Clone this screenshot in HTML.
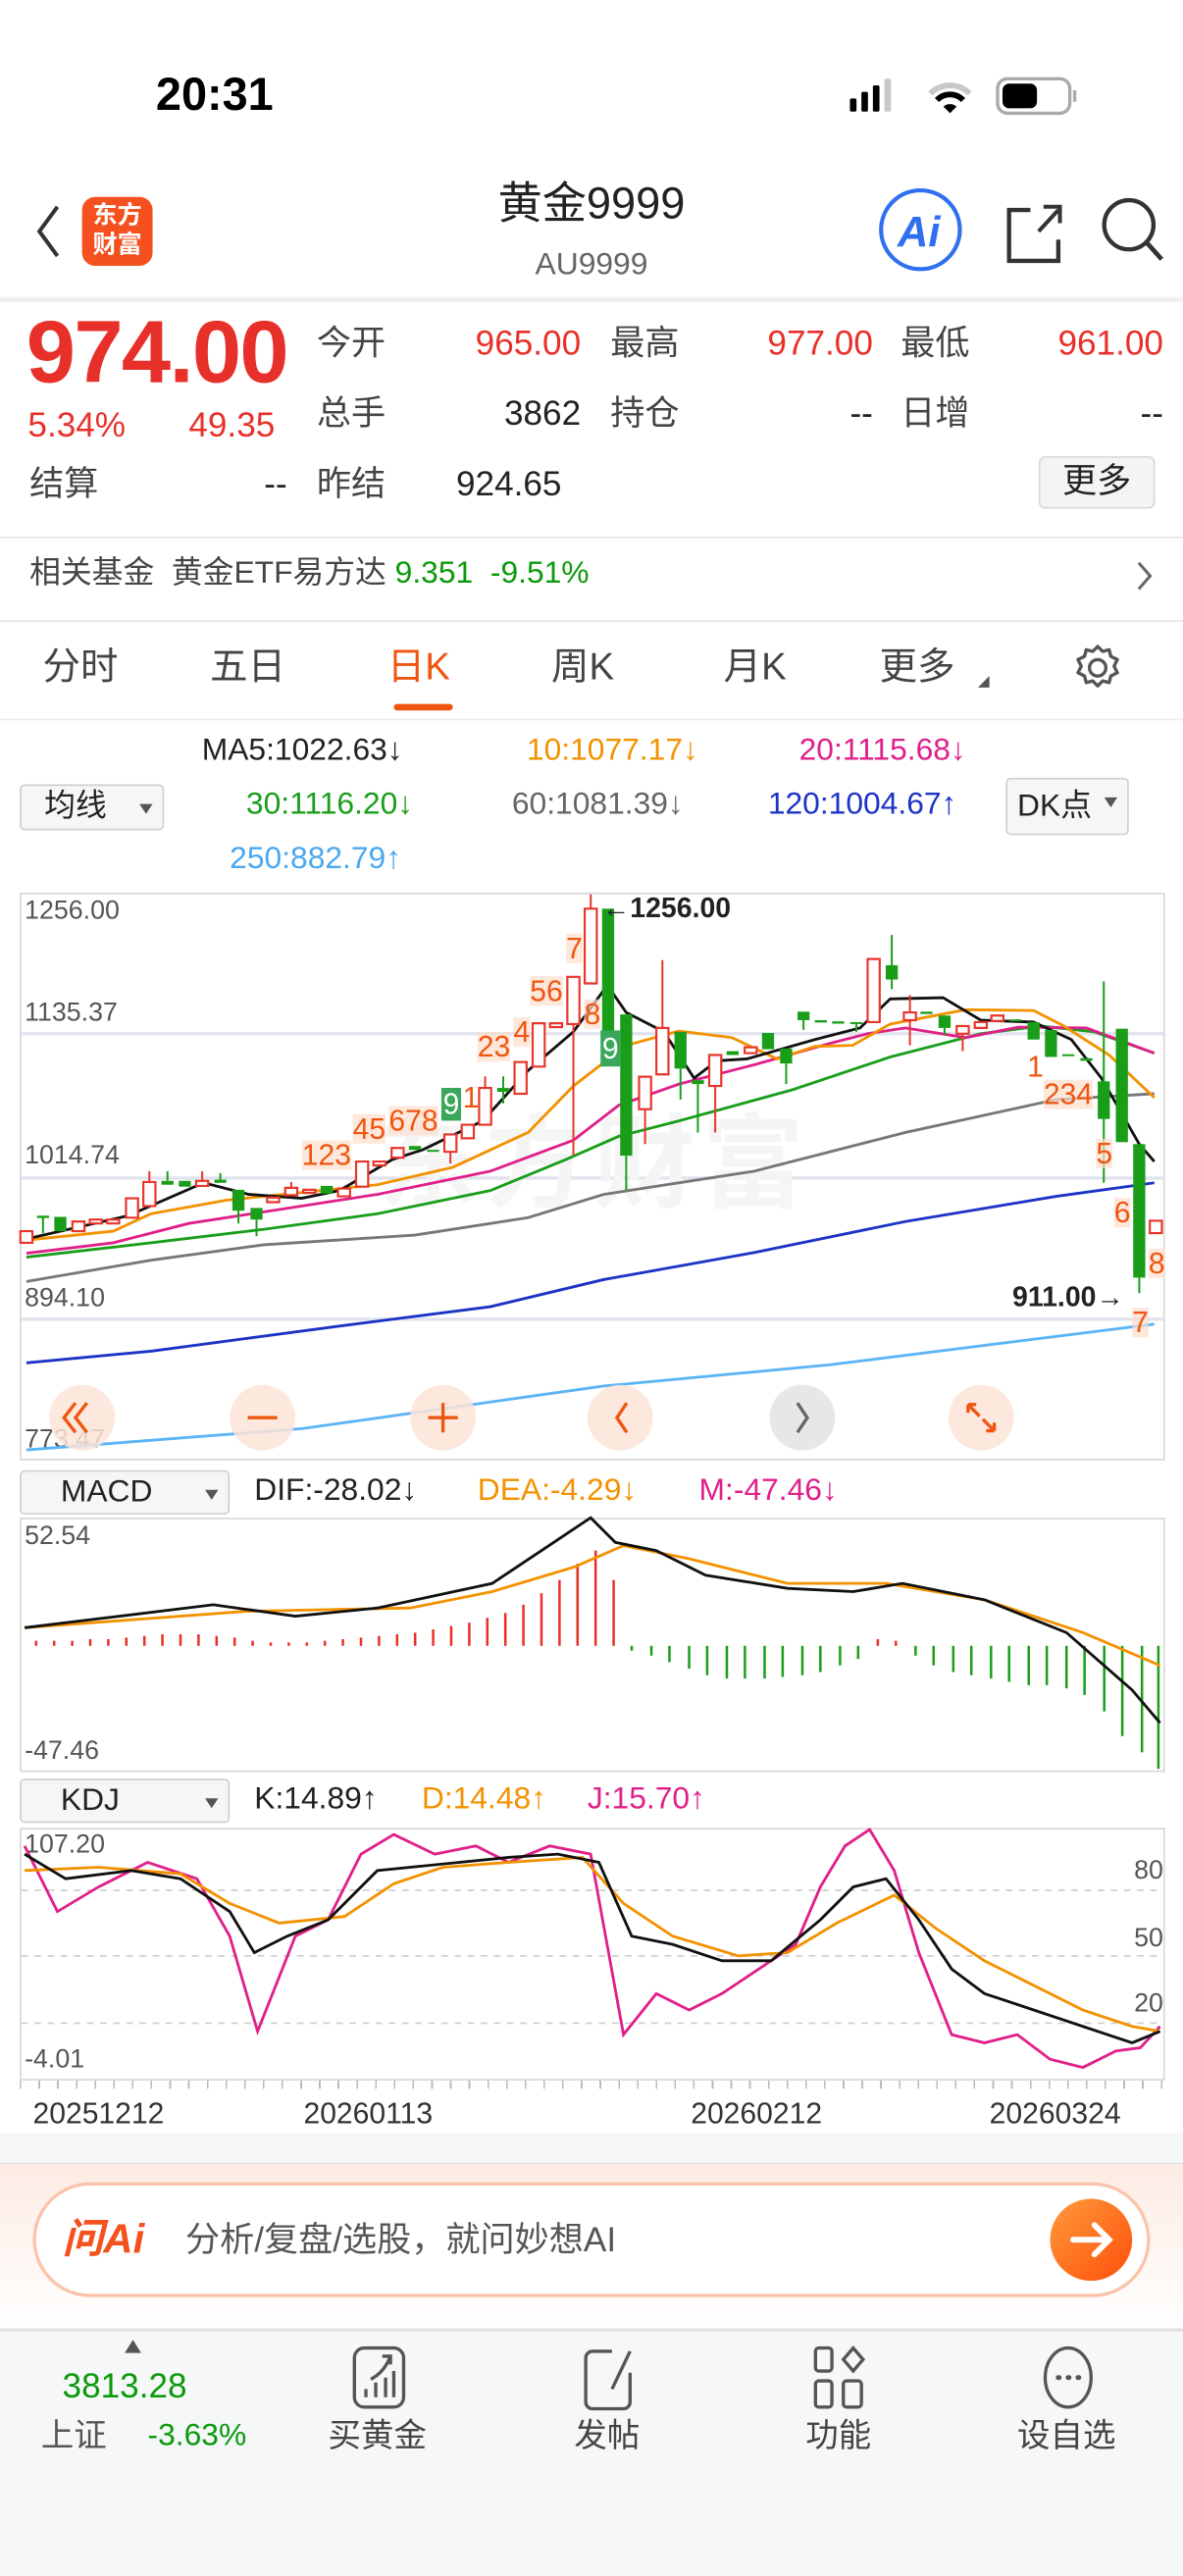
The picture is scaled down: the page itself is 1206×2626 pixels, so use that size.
<!DOCTYPE html>
<html><head><meta charset="utf-8">
<style>
html,body{margin:0;padding:0;background:#fff;}
body{width:1206px;height:2622px;overflow:hidden;position:relative;}
#w{position:absolute;left:0;top:0;width:721px;height:1568px;transform:scale(1.672677);transform-origin:0 0;font-family:"Liberation Sans","Noto Sans CJK SC",sans-serif;color:#222;}
.t{position:absolute;white-space:nowrap;line-height:1;}
.r{color:#e8302a}.g{color:#0b9a0b}
.box{position:absolute;border:1px solid #d8d8d8;box-sizing:border-box;}
.dd{position:absolute;background:#f6f6f6;border:1px solid #cfcfcf;border-radius:3px;box-sizing:border-box;font-size:19px;line-height:26px;padding-left:14px;}
.dd:after{content:"";position:absolute;right:6px;top:11px;border-left:4px solid transparent;border-right:4px solid transparent;border-top:6px solid #555;}
.nb{position:absolute;width:40px;height:40px;border-radius:50%;background:#fde4d8;opacity:.85;}
</style></head><body><div id="w">

<div class="t" style="left:95px;top:44px;font-size:28px;font-weight:bold;color:#000">20:31</div>
<svg style="position:absolute;left:515px;top:45px" width="145" height="28">
<rect x="3" y="15" width="4" height="8" rx="1" fill="#000"/><rect x="10" y="11" width="4" height="12" rx="1" fill="#000"/><rect x="17" y="7" width="4" height="16" rx="1" fill="#000"/><rect x="24" y="3" width="4" height="20" rx="1" fill="#c8c8c8"/>
<path d="M52 12a17 17 0 0 1 24 0" stroke="#c8c8c8" stroke-width="3.5" fill="none"/><path d="M56 16a11 11 0 0 1 16 0" stroke="#000" stroke-width="3.5" fill="none"/><path d="M60 20l4 4 4-4a6 6 0 0 0-8 0z" fill="#000"/>
<rect x="93" y="3" width="44" height="21" rx="6" fill="none" stroke="#aaa" stroke-width="2"/><rect x="96" y="6" width="21" height="15" rx="4" fill="#000"/><rect x="139" y="10" width="2" height="7" fill="#aaa"/>
</svg>

<svg style="position:absolute;left:15px;top:120px" width="30" height="42"><path d="M20 6L9 21l11 15" stroke="#333" stroke-width="2.4" fill="none"/></svg>
<div style="position:absolute;left:50px;top:120px;width:43px;height:42px;border-radius:8px;background:#f4511e;color:#fff;font-weight:bold;font-size:15px;line-height:18px;text-align:center;padding-top:3px;box-sizing:border-box">东方<br>财富</div>
<div class="t" style="left:0;width:721px;text-align:center;top:111px;font-size:27px;color:#222">黄金9999</div>
<div class="t" style="left:0;width:721px;text-align:center;top:152px;font-size:19px;color:#666">AU9999</div>
<svg style="position:absolute;left:530px;top:112px" width="190" height="56">
<circle cx="31" cy="28" r="24" fill="none" stroke="#2f6ff0" stroke-width="2.5"/>
<text x="17" y="38" font-family="Liberation Sans" font-weight="bold" font-style="italic" font-size="26" fill="#2f6ff0">Ai</text>
<path d="M98 16h-13v31h30v-13" stroke="#333" stroke-width="2.6" fill="none"/><path d="M103 29l12-13M106 14h10v10" stroke="#333" stroke-width="2.4" fill="none"/>
<circle cx="158" cy="25" r="15" fill="none" stroke="#333" stroke-width="2.6"/><path d="M169 36l9 10" stroke="#333" stroke-width="2.8"/>
</svg>
<div style="position:absolute;left:0;top:181px;width:721px;height:3px;background:#efefef"></div>

<div class="t r" style="left:16px;top:188px;font-size:54px;font-weight:bold;letter-spacing:-1px">974.00</div>
<div class="t r" style="left:17px;top:249px;font-size:21px">5.34%</div>
<div class="t r" style="left:115px;top:249px;font-size:21px">49.35</div>
<div class="t" style="left:193px;top:199px;font-size:21px;color:#444">今开</div>
<div class="t r" style="right:367px;top:199px;font-size:21px">965.00</div>
<div class="t" style="left:372px;top:199px;font-size:21px;color:#444">最高</div>
<div class="t r" style="right:189px;top:199px;font-size:21px">977.00</div>
<div class="t" style="left:549px;top:199px;font-size:21px;color:#444">最低</div>
<div class="t r" style="right:12px;top:199px;font-size:21px">961.00</div>
<div class="t" style="left:193px;top:242px;font-size:21px;color:#444">总手</div>
<div class="t" style="right:367px;top:242px;font-size:21px;color:#222">3862</div>
<div class="t" style="left:372px;top:242px;font-size:21px;color:#444">持仓</div>
<div class="t" style="right:189px;top:242px;font-size:21px">--</div>
<div class="t" style="left:549px;top:242px;font-size:21px;color:#444">日增</div>
<div class="t" style="right:12px;top:242px;font-size:21px">--</div>
<div class="t" style="left:18px;top:285px;font-size:21px;color:#444">结算</div>
<div class="t" style="right:546px;top:285px;font-size:21px">--</div>
<div class="t" style="left:193px;top:285px;font-size:21px;color:#444">昨结</div>
<div class="t" style="left:278px;top:285px;font-size:21px">924.65</div>
<div style="position:absolute;left:633px;top:278px;width:71px;height:32px;background:#f3f4f6;border:1px solid #d9d9d9;border-radius:4px;box-sizing:border-box;font-size:21px;text-align:center;line-height:30px">更多</div>
<div style="position:absolute;left:0;top:327px;width:721px;height:1px;background:#e6e6e6"></div>
<div class="t" style="left:18px;top:340px;font-size:19px;color:#444">相关基金&nbsp;&nbsp;黄金ETF易方达 <span class="g">9.351&nbsp;&nbsp;-9.51%</span></div>
<svg style="position:absolute;left:690px;top:340px" width="16" height="22"><path d="M4 3l7 8-7 8" stroke="#666" stroke-width="1.8" fill="none"/></svg>
<div style="position:absolute;left:0;top:378px;width:721px;height:1px;background:#e6e6e6"></div>

<div class="t" style="left:26px;top:395px;font-size:23px;color:#444">分时</div>
<div class="t" style="left:128px;top:395px;font-size:23px;color:#444">五日</div>
<div class="t" style="left:236px;top:395px;font-size:23px;color:#f0550f">日K</div>
<div class="t" style="left:336px;top:395px;font-size:23px;color:#444">周K</div>
<div class="t" style="left:441px;top:395px;font-size:23px;color:#444">月K</div>
<div class="t" style="left:536px;top:395px;font-size:23px;color:#444">更多</div>
<svg style="position:absolute;left:594px;top:410px" width="10" height="10"><path d="M9 2v7H2z" fill="#555"/></svg>
<svg style="position:absolute;left:652px;top:390px" width="34" height="34"><circle cx="17" cy="17" r="5" fill="none" stroke="#555" stroke-width="2"/><path d="M17 4l3 3 4-1 1 4 4 2-2 4 2 4-4 2-1 4-4-1-3 3-3-3-4 1-1-4-4-2 2-4-2-4 4-2 1-4 4 1z" fill="none" stroke="#555" stroke-width="2" stroke-linejoin="round"/></svg>
<div style="position:absolute;left:240px;top:429px;width:36px;height:4px;border-radius:2px;background:#f0550f"></div>
<div style="position:absolute;left:0;top:438px;width:721px;height:1px;background:#ececec"></div>

<div class="t" style="left:123px;top:448px;font-size:19px;color:#222">MA5:1022.63↓</div>
<div class="t" style="left:321px;top:448px;font-size:19px;color:#f39200">10:1077.17↓</div>
<div class="t" style="left:487px;top:448px;font-size:19px;color:#e0208a">20:1115.68↓</div>
<div class="dd" style="left:12px;top:478px;width:88px;height:28px">均线</div>
<div class="t" style="left:150px;top:481px;font-size:19px;color:#1a9e1a">30:1116.20↓</div>
<div class="t" style="left:312px;top:481px;font-size:19px;color:#666">60:1081.39↓</div>
<div class="t" style="left:468px;top:481px;font-size:19px;color:#1d33c6">120:1004.67↑</div>
<div class="dd" style="left:613px;top:474px;width:75px;height:35px;line-height:33px;padding-left:6px">DK点</div>
<div class="t" style="left:140px;top:514px;font-size:19px;color:#4aa8f0">250:882.79↑</div>

<div class="box" style="left:12px;top:544px;width:698px;height:346px"></div>
<div style="position:absolute;left:13px;top:629px;width:696px;height:2px;background:#e1e4ee"></div>
<div style="position:absolute;left:13px;top:717px;width:696px;height:2px;background:#e1e4ee"></div>
<div style="position:absolute;left:13px;top:803px;width:696px;height:2px;background:#e1e4ee"></div>
<div class="t" style="left:230px;top:680px;font-size:62px;font-weight:bold;color:#f5f5f5;letter-spacing:4px">东方财富</div>
<div class="t" style="left:15px;top:548px;font-size:16px;color:#555">1256.00</div>
<div class="t" style="left:15px;top:610px;font-size:16px;color:#555">1135.37</div>
<div class="t" style="left:15px;top:697px;font-size:16px;color:#555">1014.74</div>
<div class="t" style="left:15px;top:784px;font-size:16px;color:#555">894.10</div>
<div class="t" style="left:15px;top:870px;font-size:16px;color:#555">773.47</div>

<svg style="position:absolute;left:0;top:525px" width="721" height="370" viewBox="0 0 1568 1568" preserveAspectRatio="none">
<g fill="none" stroke-width="1.7" vector-effect="non-scaling-stroke">
<polyline vector-effect="non-scaling-stroke" stroke="#5ab4f5" points="35,1520 400,1465 800,1355 1100,1300 1530,1195"/>
<polyline vector-effect="non-scaling-stroke" stroke="#1d33c6" points="35,1295 200,1265 450,1200 650,1150 800,1080 1000,1010 1200,930 1400,865 1530,830"/>
<polyline vector-effect="non-scaling-stroke" stroke="#777" points="35,1085 200,1030 350,990 550,965 700,920 800,860 1000,800 1200,700 1400,615 1530,600"/>
<polyline vector-effect="non-scaling-stroke" stroke="#1a9e1a" points="35,1022 200,985 350,950 500,910 650,850 750,770 820,710 900,670 1050,590 1180,505 1300,445 1380,425 1450,440 1530,495"/>
<polyline vector-effect="non-scaling-stroke" stroke="#e0208a" points="35,1012 150,985 250,935 350,905 500,860 650,800 760,720 820,630 900,575 1000,525 1100,470 1150,445 1200,430 1280,455 1350,428 1440,430 1530,495"/>
<polyline vector-effect="non-scaling-stroke" stroke="#f39200" points="35,978 150,955 200,910 300,875 400,855 500,835 600,790 700,700 760,580 830,475 900,438 970,455 1030,510 1080,478 1130,475 1180,420 1280,383 1370,385 1410,425 1470,500 1530,610"/>
<polyline vector-effect="non-scaling-stroke" stroke="#111" points="35,975 170,915 270,830 330,860 400,870 450,850 520,770 560,745 640,670 700,540 760,440 805,320 830,390 880,440 920,560 950,515 990,510 1080,460 1140,430 1180,355 1250,352 1300,410 1370,415 1420,460 1460,560 1510,730 1530,775"/>
</g>
<path vector-effect="non-scaling-stroke" stroke="#e8352b" stroke-width="1.2" d="M198 800V828M268 800V825M386 828V843M597 750V780M643 555V585M760 420V760M783 85V122M855 640V730M878 255V430M948 580V700M1206 345V475M1276 445V490"/>
<path vector-effect="non-scaling-stroke" stroke="#1a9e1a" stroke-width="1.2" d="M222 800V825M292 805V822M316 902V935M340 925V968M667 555V625M830 760V850M902 535V615M925 575V700M1042 522V575M1065 410V435M1135 420V440M1182 190V330M1252 430V450M1463 310V830M1510 1075V1115M57 915V960M80 918V955"/>
<g fill="#fff" stroke="#e8352b" stroke-width="1.3">
<rect vector-effect="non-scaling-stroke" x="27" y="955" width="16" height="30"/><rect vector-effect="non-scaling-stroke" x="96" y="930" width="16" height="25"/><rect vector-effect="non-scaling-stroke" x="119" y="925" width="16" height="10"/><rect vector-effect="non-scaling-stroke" x="142" y="925" width="16" height="10"/><rect vector-effect="non-scaling-stroke" x="167" y="870" width="16" height="50"/><rect vector-effect="non-scaling-stroke" x="190" y="828" width="16" height="62"/><rect vector-effect="non-scaling-stroke" x="260" y="825" width="16" height="13"/><rect vector-effect="non-scaling-stroke" x="354" y="868" width="16" height="12"/><rect vector-effect="non-scaling-stroke" x="378" y="843" width="16" height="19"/><rect vector-effect="non-scaling-stroke" x="402" y="848" width="16" height="8"/><rect vector-effect="non-scaling-stroke" x="448" y="845" width="16" height="20"/><rect vector-effect="non-scaling-stroke" x="472" y="775" width="16" height="65"/><rect vector-effect="non-scaling-stroke" x="495" y="775" width="16" height="10"/><rect vector-effect="non-scaling-stroke" x="519" y="740" width="16" height="25"/><rect vector-effect="non-scaling-stroke" x="589" y="705" width="16" height="45"/><rect vector-effect="non-scaling-stroke" x="612" y="680" width="16" height="35"/><rect vector-effect="non-scaling-stroke" x="635" y="585" width="16" height="95"/><rect vector-effect="non-scaling-stroke" x="682" y="518" width="16" height="82"/><rect vector-effect="non-scaling-stroke" x="706" y="418" width="16" height="112"/><rect vector-effect="non-scaling-stroke" x="729" y="418" width="16" height="10"/><rect vector-effect="non-scaling-stroke" x="752" y="298" width="16" height="122"/><rect vector-effect="non-scaling-stroke" x="775" y="122" width="16" height="193"/><rect vector-effect="non-scaling-stroke" x="847" y="556" width="16" height="84"/><rect vector-effect="non-scaling-stroke" x="870" y="430" width="16" height="120"/><rect vector-effect="non-scaling-stroke" x="940" y="500" width="16" height="80"/><rect vector-effect="non-scaling-stroke" x="987" y="480" width="16" height="15"/><rect vector-effect="non-scaling-stroke" x="1150" y="252" width="16" height="163"/><rect vector-effect="non-scaling-stroke" x="1198" y="390" width="16" height="20"/><rect vector-effect="non-scaling-stroke" x="1268" y="425" width="16" height="20"/><rect vector-effect="non-scaling-stroke" x="1292" y="415" width="16" height="15"/><rect vector-effect="non-scaling-stroke" x="1314" y="398" width="16" height="14"/><rect vector-effect="non-scaling-stroke" x="1524" y="928" width="16" height="32"/>
</g>
<g fill="#1a9e1a">
<rect x="49" y="915" width="16" height="6"/><rect x="72" y="918" width="16" height="37"/><rect x="214" y="825" width="16" height="10"/><rect x="237" y="825" width="16" height="15"/><rect x="284" y="822" width="16" height="8"/><rect x="308" y="848" width="16" height="54"/><rect x="332" y="895" width="16" height="30"/><rect x="425" y="838" width="16" height="20"/><rect x="542" y="735" width="16" height="10"/><rect x="566" y="745" width="16" height="5"/><rect x="659" y="585" width="16" height="10"/><rect x="798" y="122" width="16" height="318"/><rect x="822" y="395" width="16" height="365"/><rect x="894" y="440" width="16" height="95"/><rect x="917" y="565" width="16" height="10"/><rect x="963" y="490" width="16" height="10"/><rect x="1010" y="443" width="16" height="42"/><rect x="1034" y="483" width="16" height="39"/><rect x="1057" y="388" width="16" height="22"/><rect x="1080" y="410" width="16" height="6"/><rect x="1103" y="413" width="16" height="6"/><rect x="1127" y="415" width="16" height="5"/><rect x="1174" y="268" width="16" height="37"/><rect x="1220" y="388" width="16" height="6"/><rect x="1244" y="398" width="16" height="32"/><rect x="1338" y="408" width="16" height="5"/><rect x="1362" y="415" width="16" height="45"/><rect x="1385" y="435" width="16" height="70"/><rect x="1408" y="498" width="16" height="5"/><rect x="1432" y="508" width="16" height="7"/><rect x="1455" y="568" width="16" height="97"/><rect x="1479" y="432" width="16" height="293"/><rect x="1502" y="730" width="16" height="345"/>
</g>
</svg>
<div style="position:absolute;font-size:18px;color:#f0550f;line-height:1">
<span class="t" style="left:184px;top:695px;background:rgba(253,222,205,.7)">123</span>
<span class="t" style="left:215px;top:679px;background:rgba(253,222,205,.7)">45</span>
<span class="t" style="left:237px;top:674px;background:rgba(253,222,205,.7)">678</span>
<span class="t" style="left:269px;top:663px;background:#3aa85a;color:#fff;padding:1px 1px">9</span>
<span class="t" style="left:282px;top:660px">1</span>
<span class="t" style="left:291px;top:629px;background:rgba(253,222,205,.7)">23</span>
<span class="t" style="left:313px;top:620px;background:rgba(253,222,205,.7)">4</span>
<span class="t" style="left:323px;top:595px;background:rgba(253,222,205,.7)">56</span>
<span class="t" style="left:345px;top:569px;background:rgba(253,222,205,.7)">7</span>
<span class="t" style="left:356px;top:609px;background:rgba(253,222,205,.7)">8</span>
<span class="t" style="left:366px;top:628px;background:#3aa85a;color:#fff;padding:2px 1px">9</span>
<span class="t" style="left:626px;top:641px">1</span>
<span class="t" style="left:636px;top:658px;background:rgba(253,222,205,.7)">234</span>
<span class="t" style="left:668px;top:694px;background:rgba(253,222,205,.7)">5</span>
<span class="t" style="left:679px;top:730px;background:rgba(253,222,205,.7)">6</span>
<span class="t" style="left:700px;top:761px;background:rgba(253,222,205,.7)">8</span>
<span class="t" style="left:690px;top:797px;background:rgba(253,222,205,.7)">7</span>
</div>
<div class="t" style="left:367px;top:545px;font-size:17px;font-weight:bold;color:#222">←1256.00</div>
<div class="t" style="left:617px;top:782px;font-size:17px;font-weight:bold;color:#222">911.00→</div>

<div class="nb" style="left:30px;top:844px"></div><div class="nb" style="left:140px;top:844px"></div><div class="nb" style="left:250px;top:844px"></div><div class="nb" style="left:358px;top:844px"></div><div class="nb" style="left:469px;top:844px;background:#e3e3e3"></div><div class="nb" style="left:578px;top:844px"></div>
<svg style="position:absolute;left:0;top:844px" width="721" height="40" fill="none" stroke="#f0550f" stroke-width="2">
<path d="M46 11l-7 9 7 9M53 11l-7 9 7 9"/><path d="M151 20h18"/><path d="M261 20h18M270 11v18"/><path d="M382 11l-6 9 6 9"/><path d="M486 11l6 9-6 9" stroke="#666"/><path d="M590 12l7 7M590 12v5M590 12h5M606 28l-7-7M606 28v-5M606 28h-5"/>
</svg>

<div class="dd" style="left:12px;top:896px;width:128px;height:27px;line-height:25px;padding-left:24px">MACD</div>
<div class="t" style="left:155px;top:899px;font-size:19px;color:#222">DIF:-28.02↓</div>
<div class="t" style="left:291px;top:899px;font-size:19px;color:#f39200">DEA:-4.29↓</div>
<div class="t" style="left:426px;top:899px;font-size:19px;color:#e0208a">M:-47.46↓</div>
<div class="box" style="left:12px;top:925px;width:698px;height:155px"></div>
<div class="t" style="left:15px;top:929px;font-size:16px;color:#555">52.54</div>
<div class="t" style="left:15px;top:1060px;font-size:16px;color:#555">-47.46</div>

<div class="dd" style="left:12px;top:1084px;width:128px;height:27px;line-height:25px;padding-left:24px">KDJ</div>
<div class="t" style="left:155px;top:1087px;font-size:19px;color:#222">K:14.89↑</div>
<div class="t" style="left:257px;top:1087px;font-size:19px;color:#f39200">D:14.48↑</div>
<div class="t" style="left:358px;top:1087px;font-size:19px;color:#e0208a">J:15.70↑</div>
<div class="box" style="left:12px;top:1114px;width:698px;height:154px"></div>
<div class="t" style="left:15px;top:1117px;font-size:16px;color:#555">107.20</div>
<div class="t" style="left:15px;top:1248px;font-size:16px;color:#555">-4.01</div>
<div class="t" style="right:12px;top:1133px;font-size:16px;color:#555">80</div>
<div class="t" style="right:12px;top:1174px;font-size:16px;color:#555">50</div>
<div class="t" style="right:12px;top:1214px;font-size:16px;color:#555">20</div>
<div style="position:absolute;left:12px;top:1268px;width:698px;height:5px;background:repeating-linear-gradient(90deg,#bbb 0 1px,transparent 1px 11.4px)"></div>

<svg style="position:absolute;left:0;top:0" width="721" height="1300">
<path stroke="#ccc" stroke-dasharray="4 4" d="M13 1152H709M13 1192H709M13 1233H709"/>
<path stroke="#e8302a" stroke-width="1.5" d="M22 1003v-3M33 1003v-3M44 1003v-3M55 1003v-4M66 1003v-4M77 1003v-5M88 1003v-6M99 1003v-7M110 1003v-7M121 1003v-7M132 1003v-6M143 1003v-5M154 1003v-3M165 1003v-2M176 1003v-2M187 1003v-2M198 1003v-3M209 1003v-4M220 1003v-5M231 1003v-6M242 1003v-7M253 1003v-8M264 1003v-10M275 1003v-12M286 1003v-14M297 1003v-17M308 1003v-20M319 1003v-25M330 1003v-32M341 1003v-40M352 1003v-50M363 1003v-58M374 1003v-40M535 1003v-4M546 1003v-3"/>
<path stroke="#1a9e1a" stroke-width="1.5" d="M385 1003v3M397 1003v6M408 1003v10M420 1003v14M431 1003v18M443 1003v20M454 1003v20M466 1003v20M477 1003v19M489 1003v18M500 1003v16M512 1003v12M523 1003v8M558 1003v6M569 1003v12M581 1003v16M592 1003v18M604 1003v20M615 1003v22M627 1003v24M638 1003v24M650 1003v26M661 1003v30M673 1003v40M684 1003v55M696 1003v65M706 1003v75"/>
<g fill="none" stroke-width="1.7">
<polyline stroke="#f39200" points="15,992 150,982 250,980 300,970 350,955 380,942 420,950 480,965 540,965 600,975 660,995 707,1015"/>
<polyline stroke="#111" points="15,992 130,978 180,985 230,980 300,965 330,945 360,925 375,940 400,945 430,960 480,968 520,970 550,965 600,975 650,995 690,1030 707,1050"/>
<polyline stroke="#e0208a" points="15,1125 35,1165 60,1150 90,1135 120,1145 140,1180 157,1238 180,1180 200,1170 220,1130 240,1118 265,1130 290,1125 310,1135 335,1125 360,1130 380,1240 400,1215 420,1225 440,1215 470,1195 485,1185 500,1150 515,1125 530,1115 545,1140 560,1190 580,1240 600,1245 620,1240 640,1255 660,1260 680,1250 695,1248 707,1235"/>
<polyline stroke="#f39200" points="15,1140 60,1138 110,1142 140,1160 170,1172 210,1168 240,1148 270,1138 310,1135 355,1132 380,1160 410,1180 450,1192 480,1190 510,1172 545,1155 570,1175 600,1195 630,1210 660,1225 690,1235 707,1238"/>
<polyline stroke="#111" points="15,1130 40,1145 80,1140 110,1145 140,1165 155,1190 175,1180 200,1170 230,1140 250,1138 280,1135 310,1132 340,1130 365,1135 385,1180 410,1185 440,1195 470,1195 500,1170 520,1150 540,1145 560,1170 580,1200 600,1215 630,1225 660,1235 690,1245 707,1238"/>
</g>
</svg>

<div class="t" style="left:20px;top:1279px;font-size:18px;color:#333">20251212</div>
<div class="t" style="left:185px;top:1279px;font-size:18px;color:#333">20260113</div>
<div class="t" style="left:421px;top:1279px;font-size:18px;color:#333">20260212</div>
<div class="t" style="left:603px;top:1279px;font-size:18px;color:#333">20260324</div>
<div style="position:absolute;left:0;top:1300px;width:721px;height:18px;background:#f6f7f9"></div>

<div style="position:absolute;left:0;top:1318px;width:721px;height:101px;background:linear-gradient(#fdebe3,#fff);border-top:1px solid #e3e3e3"></div>
<div style="position:absolute;left:20px;top:1330px;width:681px;height:70px;box-sizing:border-box;border:2px solid #fbc4aa;border-radius:35px;background:#fff"></div>
<div class="t" style="left:38px;top:1353px;font-size:25px;font-weight:bold;font-style:italic;color:#f4511e">问Ai</div>
<div class="t" style="left:113px;top:1355px;font-size:21px;color:#555">分析/复盘/选股，就问妙想AI</div>
<div style="position:absolute;left:640px;top:1340px;width:50px;height:50px;border-radius:50%;background:linear-gradient(135deg,#ff9a3c,#ff4f0a)"></div>
<svg style="position:absolute;left:640px;top:1340px" width="50" height="50"><path d="M14 25h21M27 16l9 9-9 9" stroke="#fff" stroke-width="3.5" fill="none" stroke-linecap="round"/></svg>

<div style="position:absolute;left:0;top:1419px;width:721px;height:149px;background:#f6f7f9;border-top:2px solid #e2e2e2"></div>
<svg style="position:absolute;left:75px;top:1425px" width="12" height="10"><path d="M6 1l5 8H1z" fill="#555"/></svg>
<div class="t g" style="left:38px;top:1444px;font-size:21px">3813.28</div>
<div class="t" style="left:25px;top:1475px;font-size:20px;color:#555">上证</div>
<div class="t g" style="left:90px;top:1475px;font-size:19px">-3.63%</div>
<svg style="position:absolute;left:0;top:1428px" width="721" height="44" fill="none" stroke="#555" stroke-width="2">
<rect x="216" y="3" width="30" height="36" rx="6"/><path d="M223 33v-5M229 33v-9M235 33v-12M240 33v-16M226 22q8-4 12-14M233 8h5v5"/>
<path d="M373 5h-12a4 4 0 0 0-4 4v27a4 4 0 0 0 4 4h19a4 4 0 0 0 4-4V18M373 28l11-23"/>
<rect x="497" y="3" width="10" height="14" rx="2"/><path d="M520 3l6 7-6 7-6-7z"/><rect x="497" y="23" width="10" height="16" rx="2"/><rect x="514" y="23" width="11" height="16" rx="2"/>
<ellipse cx="651" cy="21" rx="14" ry="18"/><path d="M645 21h.5M651 21h.5M657 21h.5" stroke-width="3" stroke-linecap="round"/>
</svg>
<div class="t" style="left:200px;top:1475px;font-size:20px;color:#444">买黄金</div>
<div class="t" style="left:350px;top:1475px;font-size:20px;color:#444">发帖</div>
<div class="t" style="left:491px;top:1475px;font-size:20px;color:#444">功能</div>
<div class="t" style="left:620px;top:1475px;font-size:20px;color:#444">设自选</div>

</div></body></html>
